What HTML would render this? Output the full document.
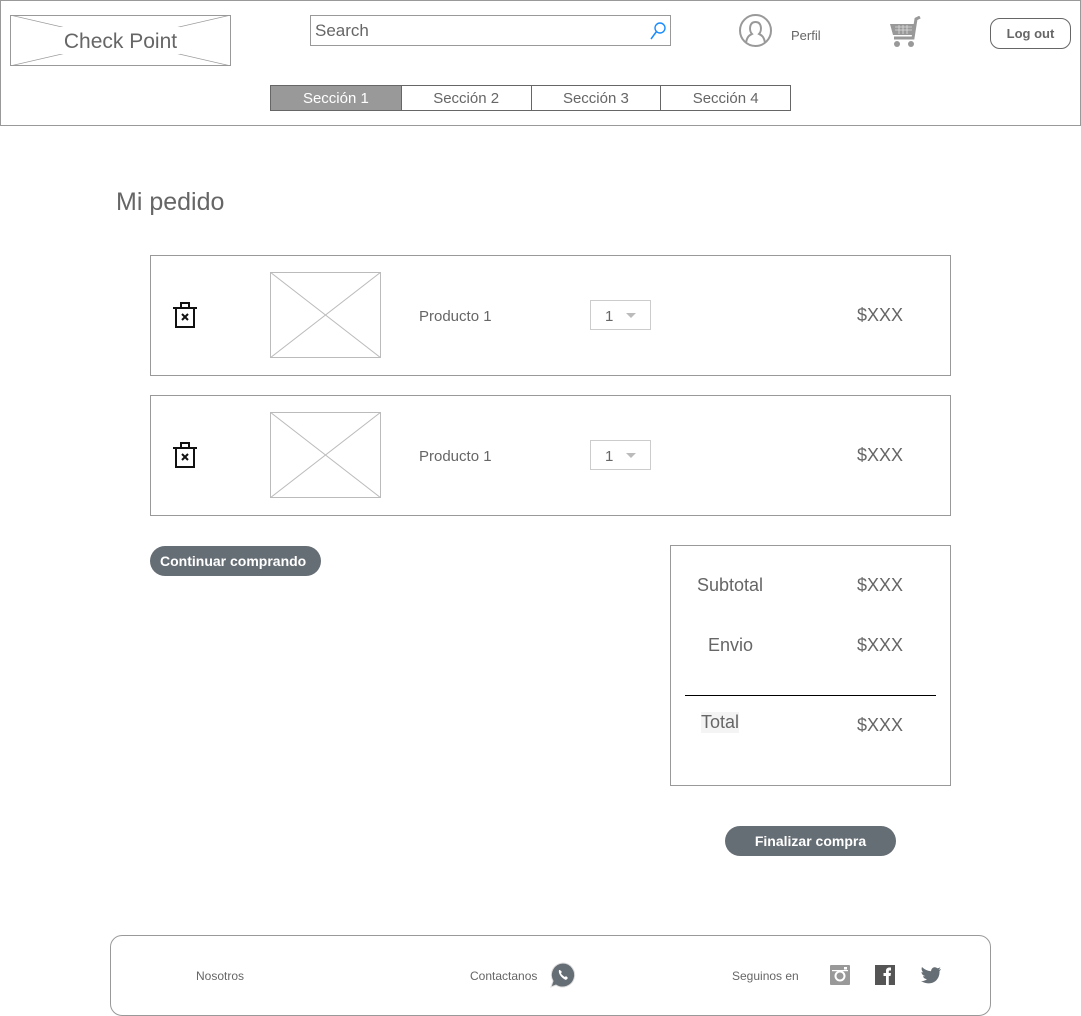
<!DOCTYPE html>
<html><head><meta charset="utf-8">
<style>
*{box-sizing:border-box;margin:0;padding:0}
body{width:1081px;height:1016px;background:#fff;font-family:"Liberation Sans",sans-serif;position:relative;overflow:hidden;color:#666}
.a{position:absolute}
</style></head><body>
<div class="a" style="left:0;top:0;width:1081px;height:126px;border:1px solid #999"></div>
<svg class="a" style="left:10px;top:15px" width="221" height="51"><rect x=".5" y=".5" width="220" height="50" fill="#fff" stroke="#999"/><line x1="0" y1="0" x2="221" y2="51" stroke="#999" stroke-width=".7"/><line x1="221" y1="0" x2="0" y2="51" stroke="#999" stroke-width=".7"/><rect x="50" y="12" width="120" height="27" fill="#fff"/></svg>
<div class="a" style="left:10px;top:30px;width:221px;text-align:center;font-size:21px;color:#666">Check Point</div>
<div class="a" style="left:310px;top:15px;width:361px;height:31px;border:1px solid #999"></div>
<div class="a" style="left:315px;top:21px;font-size:17px;color:#666">Search</div>
<svg class="a" style="left:649px;top:21px" width="18" height="20"><circle cx="11" cy="7" r="5" fill="none" stroke="#1a8cff" stroke-width="1.4"/><line x1="7.5" y1="10.5" x2="2" y2="18" stroke="#1a8cff" stroke-width="1.5"/></svg>
<svg class="a" style="left:738px;top:13px" width="35" height="35"><circle cx="17.5" cy="17.5" r="15.5" fill="none" stroke="#999" stroke-width="2"/><path d="M8 30 C9 23 12 22 14 21 C11 18 11 9 17.5 9 C24 9 24 18 21 21 C23 22 26 23 27 30" fill="none" stroke="#999" stroke-width="2"/></svg>
<div class="a" style="left:791px;top:28px;font-size:13px;color:#666">Perfil</div>
<svg class="a" style="left:888px;top:16px" width="34" height="33"><path d="M32 1 L28 3 L25 22 L6 22" fill="none" stroke="#999" stroke-width="3"/><path d="M2 8 L27 8 L25 19 L5 19 Z" fill="#999"/><circle cx="9" cy="28" r="3" fill="#999"/><circle cx="23" cy="28" r="3" fill="#999"/><path d="M7 11h17M7 14h17M11 9v9M15 9v9M19 9v9" stroke="#ddd" stroke-width=".8"/></svg>
<div class="a" style="left:990px;top:18px;width:81px;height:31px;border:1px solid #666;border-radius:10px;text-align:center;line-height:29px;font-size:13px;font-weight:bold;color:#666">Log out</div>
<div class="a" style="left:270px;top:85px;width:521px;height:26px;border:1px solid #666;display:flex;font-size:15px">
<div style="width:130px;background:#999;color:#fff;text-align:center;line-height:26px">Sección 1</div>
<div style="width:130px;border-left:1px solid #666;text-align:center;line-height:26px">Sección 2</div>
<div style="width:130px;border-left:1px solid #666;text-align:center;line-height:26px">Sección 3</div>
<div style="width:130px;border-left:1px solid #666;text-align:center;line-height:26px">Sección 4</div>
</div>
<div class="a" style="left:116px;top:188px;font-size:25px;color:#666">Mi pedido</div>

<div class="a" style="left:150px;top:255px;width:801px;height:121px;border:1px solid #999"></div>
<div class="a" style="left:150px;top:395px;width:801px;height:121px;border:1px solid #999"></div>
<svg class="a" style="left:172px;top:301px" width="26" height="28"><path d="M1 7 H25 M9 7 V2 H17 V7" fill="none" stroke="#111" stroke-width="2"/><path d="M4 8 V26 H22 V8" fill="none" stroke="#111" stroke-width="2"/><path d="M10 13 L16 19 M16 13 L10 19" stroke="#111" stroke-width="2"/></svg>
<svg class="a" style="left:172px;top:441px" width="26" height="28"><path d="M1 7 H25 M9 7 V2 H17 V7" fill="none" stroke="#111" stroke-width="2"/><path d="M4 8 V26 H22 V8" fill="none" stroke="#111" stroke-width="2"/><path d="M10 13 L16 19 M16 13 L10 19" stroke="#111" stroke-width="2"/></svg>
<svg class="a" style="left:270px;top:272px" width="111" height="86"><rect x=".5" y=".5" width="110" height="85" fill="none" stroke="#bbb"/><line x1="0" y1="0" x2="111" y2="86" stroke="#bbb"/><line x1="111" y1="0" x2="0" y2="86" stroke="#bbb"/></svg>
<svg class="a" style="left:270px;top:412px" width="111" height="86"><rect x=".5" y=".5" width="110" height="85" fill="none" stroke="#bbb"/><line x1="0" y1="0" x2="111" y2="86" stroke="#bbb"/><line x1="111" y1="0" x2="0" y2="86" stroke="#bbb"/></svg>
<div class="a" style="left:419px;top:308px;font-size:15px">Producto 1</div>
<div class="a" style="left:419px;top:448px;font-size:15px">Producto 1</div>
<div class="a" style="left:590px;top:300px;width:61px;height:30px;border:1px solid #ccc;font-size:15px;padding:7px 0 0 14px">1<span style="position:absolute;left:35px;top:12px;border:5px solid transparent;border-top:5px solid #bbb"></span></div>
<div class="a" style="left:590px;top:440px;width:61px;height:30px;border:1px solid #ccc;font-size:15px;padding:7px 0 0 14px">1<span style="position:absolute;left:35px;top:12px;border:5px solid transparent;border-top:5px solid #bbb"></span></div>
<div class="a" style="left:857px;top:305px;font-size:18px">$XXX</div>
<div class="a" style="left:857px;top:445px;font-size:18px">$XXX</div>

<div class="a" style="left:150px;top:546px;width:171px;height:30px;background:#666e75;border-radius:15px;color:#fff;font-weight:bold;font-size:14px;line-height:30px;padding-left:10px">Continuar comprando</div>

<div class="a" style="left:670px;top:545px;width:281px;height:241px;border:1px solid #999"></div>
<div class="a" style="left:697px;top:575px;font-size:18px">Subtotal</div>
<div class="a" style="left:857px;top:575px;font-size:18px">$XXX</div>
<div class="a" style="left:708px;top:635px;font-size:18px">Envio</div>
<div class="a" style="left:857px;top:635px;font-size:18px">$XXX</div>
<div class="a" style="left:685px;top:695px;width:251px;height:1px;background:#000"></div>
<div class="a" style="left:701px;top:712px;font-size:18px;background:#f4f4f4">Total</div>
<div class="a" style="left:857px;top:715px;font-size:18px">$XXX</div>

<div class="a" style="left:725px;top:826px;width:171px;height:30px;background:#666e75;border-radius:15px;color:#fff;font-weight:bold;font-size:14px;line-height:30px;text-align:center">Finalizar compra</div>

<div class="a" style="left:110px;top:935px;width:881px;height:81px;border:1px solid #999;border-radius:12px"></div>
<div class="a" style="left:196px;top:969px;font-size:12px">Nosotros</div>
<div class="a" style="left:470px;top:969px;font-size:12px">Contactanos</div>
<svg class="a" style="left:549px;top:961px" width="28" height="28"><path d="M14 2 A12 12 0 1 1 7 24 L2 26 L4 20 A12 12 0 0 1 14 2Z" fill="#666e75" stroke="#ddd" stroke-width="1"/><path d="M10 9 C9 12 12 17 17 19 L19 17 L17 15 L16 16 C14 15 12 13 12 12 L13 11 L11 9Z" fill="#fff"/></svg>
<div class="a" style="left:732px;top:969px;font-size:12px">Seguinos en</div>
<svg class="a" style="left:830px;top:965px" width="20" height="20"><rect width="20" height="20" rx="1" fill="#999"/><circle cx="10" cy="11" r="4.5" fill="none" stroke="#fff" stroke-width="2"/><rect x="2" y="5" width="16" height="1.2" fill="#fff"/><rect x="14" y="2" width="3" height="2.5" fill="#fff"/></svg>
<svg class="a" style="left:875px;top:965px" width="20" height="20"><rect width="20" height="20" fill="#555"/><path d="M11 20 V11 H8.5 V8 H11 V6 C11 3.5 12.5 2.5 14.5 2.5 H16 V5.5 H14.5 C13.8 5.5 13.8 6 13.8 6.5 V8 H16 L15.5 11 H13.8 V20Z" fill="#fff"/></svg>
<svg class="a" style="left:920px;top:966px" width="22" height="20"><path d="M21 3 C20 3.5 19.5 3.6 18.5 3.8 C19.5 3 20 2.2 20.3 1.2 C19.3 1.8 18.4 2.1 17.3 2.3 C15.4 0.3 11.5 1 11 5.2 C7 5 4 3 2 1 C1 3 2 5.5 3.3 6.4 C2.6 6.4 2 6.2 1.5 5.9 C1.5 8 3 9.6 5 10 C4.3 10.3 3.6 10.3 3 10.2 C3.5 12 5.2 13 7 13.1 C5.5 14.5 3 15.3 1 15 C11 21 20 15 19.5 5 C20.2 4.5 20.7 3.8 21 3Z" fill="#666e75"/></svg>
</body></html>
